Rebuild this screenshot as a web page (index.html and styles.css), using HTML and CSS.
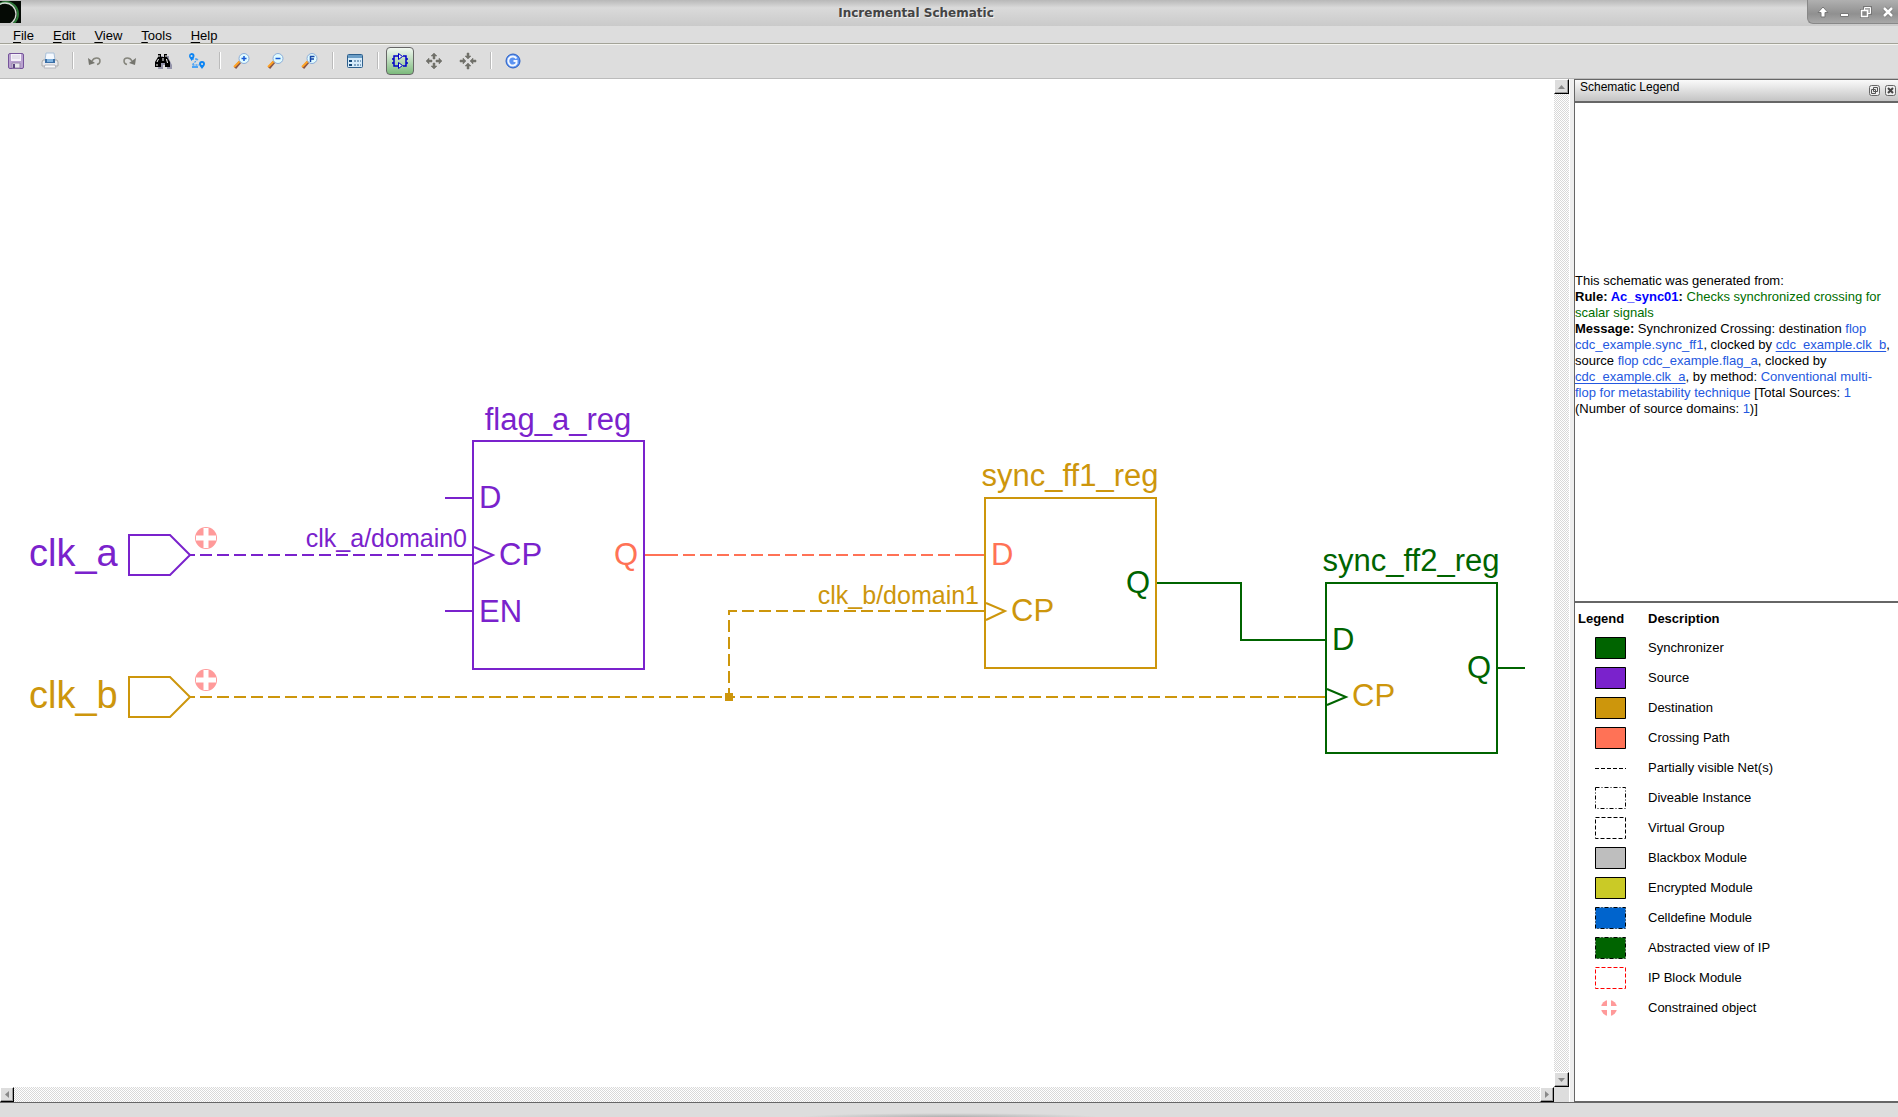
FILE: index.html
```html
<!DOCTYPE html>
<html lang="en">
<head>
<meta charset="utf-8">
<title>Incremental Schematic</title>
<link rel="stylesheet" href="styles.css">
</head>
<body>
<div class="window">
  <header class="titlebar">
    <svg class="app-icon" width="21" height="22" viewBox="0 0 21 22" aria-hidden="true"><rect width="21" height="22" fill="#050a05"/><circle cx="6" cy="13" r="12" fill="none" stroke="#2f7a3a" stroke-width="2"/><circle cx="5" cy="13" r="11" fill="none" stroke="#d5dcd5" stroke-width="1.3"/></svg>
    <h1 class="title">Incremental Schematic</h1>
    <div class="window-buttons">
      <button class="wbtn" aria-label="Shade"><svg width="12" height="12" viewBox="0 0 12 12"><path d="M6 1 11 6.500H8V11H4V6.500H1z" fill="#fff" stroke="#777"/></svg></button>
      <button class="wbtn" aria-label="Minimize"><svg width="11" height="12" viewBox="0 0 11 12"><path d="M1.500 7.500h8v3h-8z" fill="#fff" stroke="#777"/></svg></button>
      <button class="wbtn" aria-label="Restore"><svg width="12" height="12" viewBox="0 0 12 12"><path d="M4.500 1.500h6v6h-6z M1.500 4.500h6v6h-6z" fill="none" stroke="#777" stroke-width="3"/><path d="M4.500 1.500h6v6h-3v-3h-3z" fill="#aaa" stroke="#fff"/><path d="M1.500 4.500h6v6h-6z" fill="#888" stroke="#fff" stroke-width="1.500"/></svg></button>
      <button class="wbtn" aria-label="Close"><svg width="12" height="12" viewBox="0 0 12 12"><path d="m2 2 8 8m0-8-8 8" stroke="#777" stroke-width="4"/><path d="m2 2 8 8m0-8-8 8" stroke="#fff" stroke-width="2.500"/></svg></button>
    </div>
  </header>
  <nav class="menubar">
    <button class="menu"><u>F</u>ile</button>
    <button class="menu"><u>E</u>dit</button>
    <button class="menu"><u>V</u>iew</button>
    <button class="menu"><u>T</u>ools</button>
    <button class="menu"><u>H</u>elp</button>
  </nav>
  <div class="toolbar" role="toolbar">
    <button class="tool" aria-label="Save"><svg width="18" height="18" viewBox="0 0 18 18"><rect x="1.500" y="1.500" width="15" height="15" rx="1.500" fill="#b9a2cf" stroke="#76549b"/><path d="M4 2h10v7H4z" fill="#f5f1fa"/><path d="M5 4h8M5 6h8" stroke="#d5d0de"/><path d="M5 11h8v5H5z" fill="#e8e8ec" stroke="#9a88ae"/><path d="M6 12h2v4H6z" fill="#5b4380"/></svg></button>
    <button class="tool" aria-label="Print"><svg width="18" height="18" viewBox="0 0 18 18"><path d="M5 1h8l1 7H4z" fill="#f4f9ff" stroke="#a9c0d8"/><path d="M2 8h14l1 2v4H1v-4z" fill="#e9e9ed" stroke="#aaa"/><path d="M4 7h10v4H4z" fill="#3c6fa6"/><path d="M6 7h6v3H6z" fill="#80b3e0"/><path d="M4 13h10l1 3H3z" fill="#fafafa" stroke="#b5b5bd"/></svg></button>
    <span class="sep"></span>
    <button class="tool" aria-label="Undo"><svg width="18" height="18" viewBox="0 0 18 18"><path d="M6 9c2-4 8-4 8 0 0 2-1 3-3 3.500" fill="none" stroke="#85857c" stroke-width="1.500"/><path d="m2 6 1 7 6-2z" fill="#75756e"/></svg></button>
    <button class="tool" aria-label="Redo"><svg width="18" height="18" viewBox="0 0 18 18"><path d="M12 9C10 5 4 5 4 9c0 2 1 3 3 3.500" fill="none" stroke="#85857c" stroke-width="1.500"/><path d="m16 6-1 7-6-2z" fill="#75756e"/></svg></button>
    <button class="tool" aria-label="Find"><svg width="18" height="18" viewBox="0 0 18 18"><path d="M6 4h3v3h3V4h3v3l3 6v4h-5v-4H9v4H4z" fill="#9494aa"/><path d="M4 2h3v3h3V2h3v3l3 5v5h-5v-4H7v4H1v-5l3-5z" fill="#000"/><path d="M5 3v2M12 3v2M4.500 7 3 10M9 6v3M12.500 7l1 4M3 12v2" stroke="#fff"/></svg></button>
    <button class="tool" aria-label="Trace path"><svg width="18" height="18" viewBox="0 0 18 18"><path d="M4 7h6l-6 6h7" fill="none" stroke="#4ba3f5" stroke-width="1.300" stroke-dasharray="2 1"/><path fill-rule="evenodd" d="M3.500 1a3 3 0 0 1 3 3c0 2-2 3-3 5C3 7 1 6 1 4a3 3 0 0 1 2.500-3zM3.500 3a1 1 0 1 0 .1 2 1 1 0 0 0 0-2zM14 9a3 3 0 0 1 3 3c0 2-2 3-3 5-1-2-3-3-3-5a3 3 0 0 1 3-3zm0 2a1 1 0 1 0 .1 2 1 1 0 0 0 0-2z" fill="#0b84f3"/><path d="M4 14h6v2H4z" fill="#4ba3f5"/></svg></button>
    <span class="sep"></span>
    <button class="tool" aria-label="Zoom in"><svg width="18" height="18" viewBox="0 0 18 18"><path d="m7 10-5 6" stroke="#8a5546" stroke-width="3"/><path d="m7 9-6 6" stroke="#ffa224" stroke-width="2"/><circle cx="11" cy="6.500" r="5" fill="#e0fbff" stroke="#8badd9"/><path d="M8.500 6.500h5M11 4v5" stroke="#1558d6" stroke-width="1.500"/></svg></button>
    <button class="tool" aria-label="Zoom out"><svg width="18" height="18" viewBox="0 0 18 18"><path d="m7 10-5 6" stroke="#8a5546" stroke-width="3"/><path d="m7 9-6 6" stroke="#ffa224" stroke-width="2"/><circle cx="11" cy="6.500" r="5" fill="#e0fbff" stroke="#8badd9"/><path d="M8.500 6.500h5" stroke="#1558d6" stroke-width="1.500"/></svg></button>
    <button class="tool" aria-label="Zoom to fit"><svg width="18" height="18" viewBox="0 0 18 18"><path d="m7 10-5 6" stroke="#8a5546" stroke-width="3"/><path d="m7 9-6 6" stroke="#ffa224" stroke-width="2"/><circle cx="11" cy="6.500" r="5" fill="#e0fbff" stroke="#8badd9"/><path d="M9.500 10V4.500H13.500M9.500 7H13" fill="none" stroke="#1546a8" stroke-width="1.500"/></svg></button>
    <span class="sep"></span>
    <button class="tool" aria-label="Details"><svg width="18" height="18" viewBox="0 0 18 18"><rect x="1.500" y="2.500" width="15" height="13" rx="1" fill="#d6ebfa" stroke="#2d5f8c"/><path d="M2 3h14v3H2z" fill="#6a9dc6"/><path d="M3 8h3v2H3zM3 12h3v2H3z" fill="#174a78"/><path d="M8 9h7M8 13h7" stroke="#2d5f8c" stroke-dasharray="2 1"/></svg></button>
    <span class="sep"></span>
    <button class="tool tool-on" aria-label="Incremental mode" aria-pressed="true"><svg width="18" height="18" viewBox="0 0 18 18"><path d="M7 4H3v10h4M1 7h2M1 11h2M12 4h3v10h-3M15 7h2M15 11h2" fill="none" stroke="#0000c8" stroke-width="1.500"/><path d="m7.500 1.500 4 3-4 3zM7.500 10.500l4 3-4 3z" fill="#e6f4e6" stroke="#0000c8"/></svg></button>
    <button class="tool" aria-label="Expand"><svg width="18" height="18" viewBox="0 0 18 18"><path d="M9 1l3 3H10v3H8V4H6zM9 17l-3-3h2v-3h2v3h2zM1 9l3-3v2h3v2H4v2zM17 9l-3 3v-2h-3V8h3V6z" fill="#70706a" stroke="#70706a" stroke-width=".5"/></svg></button>
    <button class="tool" aria-label="Collapse"><svg width="18" height="18" viewBox="0 0 18 18"><path d="M9 7 6 4h2V1h2v3h2zM9 11l3 3h-2v3H8v-3H6zM7 9l-3 3v-2H1V8h3V6zM11 9l3-3v2h3v2h-3v2z" fill="#70706a" stroke="#70706a" stroke-width=".5"/></svg></button>
    <span class="sep"></span>
    <button class="tool" aria-label="Reload"><svg width="18" height="18" viewBox="0 0 18 18"><circle cx="9" cy="9" r="7" fill="#5c94f2" stroke="#2a5fc4"/><path d="M12.500 6.500a4.500 4.500 0 1 0 0 5V9H9.500" fill="none" stroke="#f2f7ff" stroke-width="2"/></svg></button>
  </div>

  <main class="workspace">
    <section class="viewer">
      <svg class="canvas" viewBox="0 79 1554 1008" preserveAspectRatio="xMinYMin meet" role="img" aria-label="Clock domain crossing schematic">
        <defs>
          <g id="constraint">
            <circle r="11" fill="#ff9a9a"/>
            <path class="bars" d="M0-10v20M-10 0h20"/>
          </g>
        </defs>
        <g class="src">
          <path d="M129 535h41l20 20-20 20h-41z"/>
          <path class="net" d="M189 555H445"/>
          <path d="M445 555h28M445 498h28M445 611h28"/>
          <path d="M473 441h171v228H473z"/>
          <path class="pin" d="m474 547 19 8-19 9"/>
          <text class="port-name" x="29" y="566">clk_a</text>
          <text class="domain" x="467" y="547" text-anchor="end">clk_a/domain0</text>
          <text x="558" y="430" text-anchor="middle">flag_a_reg</text>
          <text x="479" y="508">D</text>
          <text x="499" y="565">CP</text>
          <text x="479" y="622">EN</text>
        </g>
        <g class="cross">
          <path d="M645 555h27M957 555h27"/>
          <path class="net" d="M672 555h285"/>
          <text x="638" y="565" text-anchor="end">Q</text>
          <text x="991" y="565">D</text>
        </g>
        <g class="dst">
          <path d="M129 677h41l20 20-20 20h-41z"/>
          <path class="net" d="M189 697h540"/>
          <path class="net" d="M729 697h569"/>
          <path d="M1298 697h28M957 611h28"/>
          <path class="net net-start" d="M958 611H729v86"/>
          <rect class="joint" x="725" y="693" width="8" height="8"/>
          <path d="M985 498h171v170H985z"/>
          <path class="pin" d="m986 603 19 8-19 9"/>
          <text class="port-name" x="29" y="708">clk_b</text>
          <text class="domain" x="979" y="604" text-anchor="end">clk_b/domain1</text>
          <text x="1070" y="486" text-anchor="middle">sync_ff1_reg</text>
          <text x="1011" y="621">CP</text>
          <text x="1352" y="706">CP</text>
        </g>
        <g class="syn">
          <path d="M1157 583h84v57h85M1497 668h28"/>
          <path d="M1326 583h171v170h-171z"/>
          <path class="pin" d="m1327 689 19 8-19 8"/>
          <text x="1150" y="593" text-anchor="end">Q</text>
          <text x="1411" y="571" text-anchor="middle">sync_ff2_reg</text>
          <text x="1332" y="650">D</text>
          <text x="1491" y="678" text-anchor="end">Q</text>
        </g>
        <use href="#constraint" x="206" y="538"/>
        <use href="#constraint" x="206" y="680"/>
      </svg>
      <div class="scroll scroll-v">
        <button class="arrow" aria-label="Scroll up"><svg width="7" height="4" viewBox="0 0 7 4"><path d="M0 4 3.500 0 7 4z" fill="#888"/></svg></button>
        <button class="arrow" aria-label="Scroll down"><svg width="7" height="4" viewBox="0 0 7 4"><path d="M0 0h7L3.500 4z" fill="#888"/></svg></button>
      </div>
      <div class="scroll scroll-h">
        <button class="arrow" aria-label="Scroll left"><svg width="4" height="7" viewBox="0 0 4 7"><path d="M4 0v7L0 3.500z" fill="#888"/></svg></button>
        <button class="arrow" aria-label="Scroll right"><svg width="4" height="7" viewBox="0 0 4 7"><path d="M0 0v7l4-3.500z" fill="#888"/></svg></button>
      </div>
    </section>
    <div class="splitter"></div>
    <aside class="dock">
      <div class="dock-title">
        <h2 class="dock-name">Schematic Legend</h2>
        <button class="dock-btn" aria-label="Float"><svg width="11" height="11" viewBox="0 0 11 11"><rect x=".5" y=".5" width="10" height="10" rx="2" fill="#eee" stroke="#666"/><path d="M4.500 2.500h4v4h-4zM2.500 4.500h4v4h-4z" fill="#eee" stroke="#555"/></svg></button>
        <button class="dock-btn" aria-label="Close legend"><svg width="11" height="11" viewBox="0 0 11 11"><rect x=".5" y=".5" width="10" height="10" rx="2" fill="#eee" stroke="#666"/><path d="m3 3 5 5m0-5-5 5" stroke="#444" stroke-width="2"/></svg></button>
      </div>
      <div class="message">
        <p>This schematic was generated from:<br>
        <b>Rule: <span class="rule">Ac_sync01</span>:</b> <span class="ok">Checks synchronized crossing for scalar signals</span><br>
        <b>Message:</b> Synchronized Crossing: destination <span class="ref">flop cdc_example.sync_ff1</span>, clocked by <a class="ref" href="#clk_b">cdc_example.clk_b</a>, source <span class="ref">flop cdc_example.flag_a</span>, clocked by <a class="ref" href="#clk_a">cdc_example.clk_a</a>, by method: <span class="ref">Conventional multi-flop for metastability technique</span> [Total Sources: <span class="ref">1</span> (Number of source domains: <span class="ref">1</span>)]</p>
      </div>
      <div class="legend">
        <table class="legend-table">
          <thead><tr><th>Legend</th><th>Description</th></tr></thead>
          <tbody>
            <tr><td><svg class="key" viewBox="0 0 31 22"><path class="box k-syn" d="M.5.5h30v21H.5z"/></svg></td><td>Synchronizer</td></tr>
            <tr><td><svg class="key" viewBox="0 0 31 22"><path class="box k-src" d="M.5.5h30v21H.5z"/></svg></td><td>Source</td></tr>
            <tr><td><svg class="key" viewBox="0 0 31 22"><path class="box k-dst" d="M.5.5h30v21H.5z"/></svg></td><td>Destination</td></tr>
            <tr><td><svg class="key" viewBox="0 0 31 22"><path class="box k-cross" d="M.5.5h30v21H.5z"/></svg></td><td>Crossing Path</td></tr>
            <tr><td><svg class="key" viewBox="0 0 31 22"><path class="box dash" d="M0 11.500h31"/></svg></td><td>Partially visible Net(s)</td></tr>
            <tr><td><svg class="key" viewBox="0 0 31 22"><path class="box dashdot" d="M.5.5h30v21H.5z"/></svg></td><td>Diveable Instance</td></tr>
            <tr><td><svg class="key" viewBox="0 0 31 22"><path class="box dash" d="M.5.5h30v21H.5z"/></svg></td><td>Virtual Group</td></tr>
            <tr><td><svg class="key" viewBox="0 0 31 22"><path class="box k-black" d="M.5.5h30v21H.5z"/></svg></td><td>Blackbox Module</td></tr>
            <tr><td><svg class="key" viewBox="0 0 31 22"><path class="box k-enc" d="M.5.5h30v21H.5z"/></svg></td><td>Encrypted Module</td></tr>
            <tr><td><svg class="key" viewBox="0 0 31 22"><path class="box k-cell dashdot" d="M.5.5h30v21H.5z"/></svg></td><td>Celldefine Module</td></tr>
            <tr><td><svg class="key" viewBox="0 0 31 22"><path class="box k-syn dashdot" d="M.5.5h30v21H.5z"/></svg></td><td>Abstracted view of IP</td></tr>
            <tr><td><svg class="key" viewBox="0 0 31 22"><path class="box dash k-ip" d="M.5.5h30v21H.5z"/></svg></td><td>IP Block Module</td></tr>
            <tr><td><svg class="key" viewBox="0 0 31 22"><circle cx="14" cy="11" r="8" fill="#ff9a9a"/><path d="M14 2v18M5 11h18" stroke="#fff" stroke-width="4"/></svg></td><td>Constrained object</td></tr>
          </tbody>
        </table>
      </div>
    </aside>
  </main>
  <footer class="statusbar"><div class="shadow"></div></footer>
</div>
</body>
</html>
```

FILE: styles.css
```css
* { box-sizing: border-box; }

body {
  margin: 0;
  font: 13px/16px "Liberation Sans", Arial, sans-serif;
  color: #000;
  background: #ddd;
}

button {
  font: inherit;
  color: inherit;
  background: none;
  border: 0;
  padding: 0;
}

svg { display: block; }

.window {
  display: flex;
  flex-direction: column;
  height: 100vh;
  overflow: hidden;
}

.titlebar {
  display: flex;
  align-items: flex-start;
  height: 26px;
  flex: none;
  background: linear-gradient(#b8b8b8, #dadada 30%, #cacaca);
}

.app-icon { margin-top: 1px; }

.title {
  flex: 1;
  margin: 0;
  padding-left: 4px;
  font: bold 12px/26px "DejaVu Sans", Verdana, sans-serif;
  color: #444;
  text-align: center;
  text-shadow: 1px 1px #eee;
}

.window-buttons {
  display: flex;
  gap: 10px;
  align-items: center;
  height: 24px;
  padding: 0 4px 0 9px;
  background: linear-gradient(#b0b0b0, #909090 60%, #a8a8a8);
  border: 1px solid #888;
  border-width: 0 0 1px 1px;
  border-radius: 0 0 0 6px;
}

.menubar {
  display: flex;
  flex: none;
  height: 19px;
  padding: 2px 0 0 13px;
  gap: 19px;
  border-bottom: 1px solid #f4f4f0;
  box-shadow: inset 0 -1px #a3a398;
}

.menu { line-height: 16px; }
.menu u { text-underline-offset: 2px; }

.toolbar {
  display: flex;
  flex: none;
  align-items: center;
  gap: 6px;
  height: 34px;
  padding: 0 2px 2px;
  border-bottom: 1px solid #bbb;
}

.tool {
  display: grid;
  place-items: center;
  width: 28px;
  height: 28px;
}

.tool-on {
  border: 1px solid #666;
  border-radius: 4px;
  background: linear-gradient(#f2f8f2, #7cba7c);
}

.sep {
  width: 2px;
  height: 17px;
  margin: 0 1px 0 2px;
  background: linear-gradient(90deg, #bbb 1px, #fff 1px);
}

.workspace {
  display: flex;
  flex: 1;
  min-height: 0;
  border-bottom: 1px solid #666;
}

.viewer {
  flex: 1;
  min-width: 0;
  display: grid;
  grid-template: minmax(0, 1fr) 15px / minmax(0, 1fr) 15px;
}

.canvas {
  width: 100%;
  height: 100%;
  background: #fff;
  font-size: 31px;
}

.canvas path { fill: none; stroke-width: 2; }
.canvas .bars { stroke: #fff; stroke-width: 5; }
.canvas .net { stroke-dasharray: 12 5; stroke-dashoffset: 6; }
.canvas .net-start { stroke-dashoffset: 0; }
.port-name { font-size: 38px; }
.domain { font-size: 25px; }

.src path { stroke: #7a22cc; }
.src text { fill: #7a22cc; }
.dst path { stroke: #cd960c; }
.dst text, .joint { fill: #cd960c; }
.cross path { stroke: #ff7256; }
.cross text { fill: #ff7256; }
.syn path { stroke: #006400; }
.syn text { fill: #006400; }

.scroll {
  display: flex;
  justify-content: space-between;
  background: repeating-conic-gradient(#d8d8d8 0 25%, #fff 0 50%) 0 0 / 2px 2px;
}

.scroll-v { flex-direction: column; }

.arrow {
  display: grid;
  place-items: center;
  width: 15px;
  height: 15px;
  background: #ddd;
  border: 1px solid;
  border-color: #fff #000 #000 #fff;
  box-shadow: inset -1px -1px #999;
}

.scroll-h .arrow { width: 14px; }

.splitter {
  width: 5px;
  background: #eee;
  border-left: 1px solid #fff;
}

.dock {
  width: 324px;
  flex: none;
  display: flex;
  flex-direction: column;
  border-left: 1px solid #666;
  background: #fff;
}

.dock-title {
  display: flex;
  gap: 5px;
  flex: none;
  height: 24px;
  padding: 0 2px 0 5px;
  border: 1px solid #666;
  border-width: 1px 0 2px;
  background: linear-gradient(#fafafa, #c4c4c4);
}

.dock-name {
  flex: 1;
  margin: 0;
  font-size: 12px;
  font-weight: normal;
  line-height: 14px;
}

.message {
  flex: 1;
  display: flex;
  align-items: center;
}

.message p {
  margin: 0;
  padding: 0 8px 14px 0;
}

.rule { color: #00f; }
.ok { color: #006e00; }
.ref { color: #2458e0; }

a.ref {
  text-underline-offset: 2px;
  text-decoration-skip-ink: none;
}

.legend {
  flex: 1;
  border-top: 2px solid #666;
  border-bottom: 1px solid #666;
}

.legend-table { border-collapse: collapse; }

.legend-table th,
.legend-table td {
  height: 30px;
  padding: 0;
  text-align: left;
}

.legend-table th { padding-top: 1px; }
.legend-table th:first-child { width: 73px; padding-left: 3px; }
.legend-table td:first-child { padding-left: 20px; }

.key { width: 31px; height: 22px; }
.box { fill: none; stroke: #000; }
.k-syn { fill: #006400; }
.k-src { fill: #7a22cc; }
.k-dst { fill: #cd960c; }
.k-cross { fill: #ff7256; }
.k-black { fill: #bebebe; }
.k-enc { fill: #caca26; }
.k-cell { fill: #0064cd; }
.k-ip { stroke: #f00; }
.dash { stroke-dasharray: 4 2; }
.dashdot { stroke-dasharray: 4 2 1 2; }

.statusbar {
  flex: none;
  display: flex;
  align-items: flex-end;
  justify-content: center;
  height: 14px;
}

.shadow {
  width: 300px;
  height: 4px;
  background: radial-gradient(ellipse at bottom, #b0b0b0, #ddd 70%);
}
```
